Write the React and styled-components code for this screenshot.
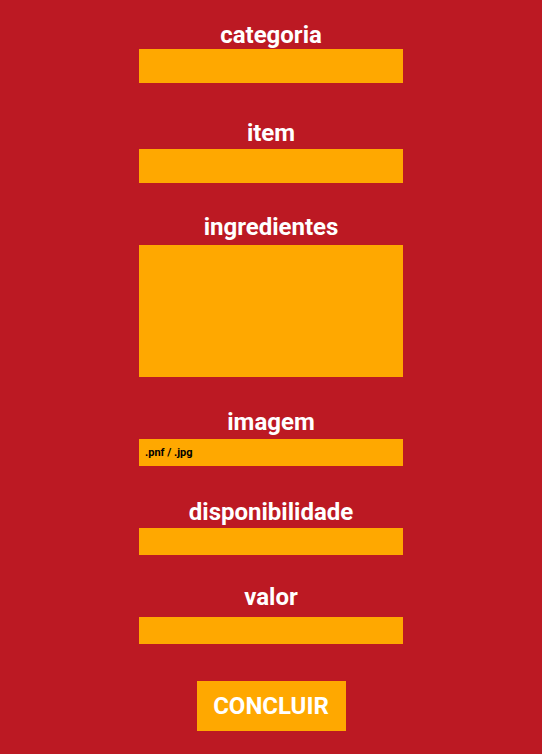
import React from 'react';
import styled, { createGlobalStyle } from 'styled-components';

const GlobalStyle = createGlobalStyle`
    html, body {
        margin: 0;
        padding: 0;
        background: #bc1923;
    }
    body {
        font-family: Roboto, "Liberation Sans", Arial, sans-serif;
    }
`;

const Page = styled.div`
    width: 100%;
    min-height: 754px;
    background: #bc1923;
    display: flex;
    flex-direction: column;
    align-items: center;
`;

const Field = styled.div`
    display: flex;
    flex-direction: column;
    align-items: center;
    margin-top: ${(props) => props.$top}px;
`;

const Label = styled.label`
    color: #fff;
    font-size: 24px;
    font-weight: 700;
    line-height: 28px;
    height: 28px;
    margin-bottom: ${(props) => props.$gap}px;
`;

const Input = styled.input`
    box-sizing: border-box;
    width: 264px;
    height: ${(props) => props.$h}px;
    border: none;
    outline: none;
    background: #ffa800;
    padding: 0 6px;
    margin: 0;
    font-family: Roboto, "Liberation Sans", Arial, sans-serif;
    font-size: 11px;
    font-weight: 700;
    color: #000;
    display: block;
    &::placeholder {
        color: #000;
        opacity: 1;
    }
`;

const Area = styled.textarea`
    box-sizing: border-box;
    width: 264px;
    height: 132px;
    border: none;
    outline: none;
    resize: none;
    background: #ffa800;
    margin: 0;
    padding: 6px;
    display: block;
    font-family: Roboto, "Liberation Sans", Arial, sans-serif;
`;

const Button = styled.button`
    margin-top: 37px;
    width: 149px;
    height: 50px;
    border: none;
    background: #ffa800;
    color: #fff;
    font-family: Roboto, "Liberation Sans", Arial, sans-serif;
    font-size: 24px;
    font-weight: 700;
    padding: 0;
    cursor: pointer;
`;

// campos do formulario
const campos = [
    { nome: 'categoria', top: 21, gap: 0, h: 34 },
    { nome: 'item', top: 36, gap: 2, h: 34 },
    { nome: 'ingredientes', top: 30, gap: 4, area: true },
    { nome: 'imagem', top: 31, gap: 3, h: 27, placeholder: '.pnf / .jpg' },
    { nome: 'disponibilidade', top: 32, gap: 2, h: 27 },
    { nome: 'valor', top: 28, gap: 6, h: 27 },
];

const App = () => {
    return (
        <Page>
            <GlobalStyle />
            {campos.map((c) => (
                <Field key={c.nome} $top={c.top}>
                    <Label $gap={c.gap} htmlFor={c.nome}>{c.nome}</Label>
                    {c.area ? (
                        <Area id={c.nome} />
                    ) : (
                        <Input id={c.nome} $h={c.h} placeholder={c.placeholder || ''} />
                    )}
                </Field>
            ))}
            <Button>CONCLUIR</Button>
        </Page>
    );
};

export default App;
